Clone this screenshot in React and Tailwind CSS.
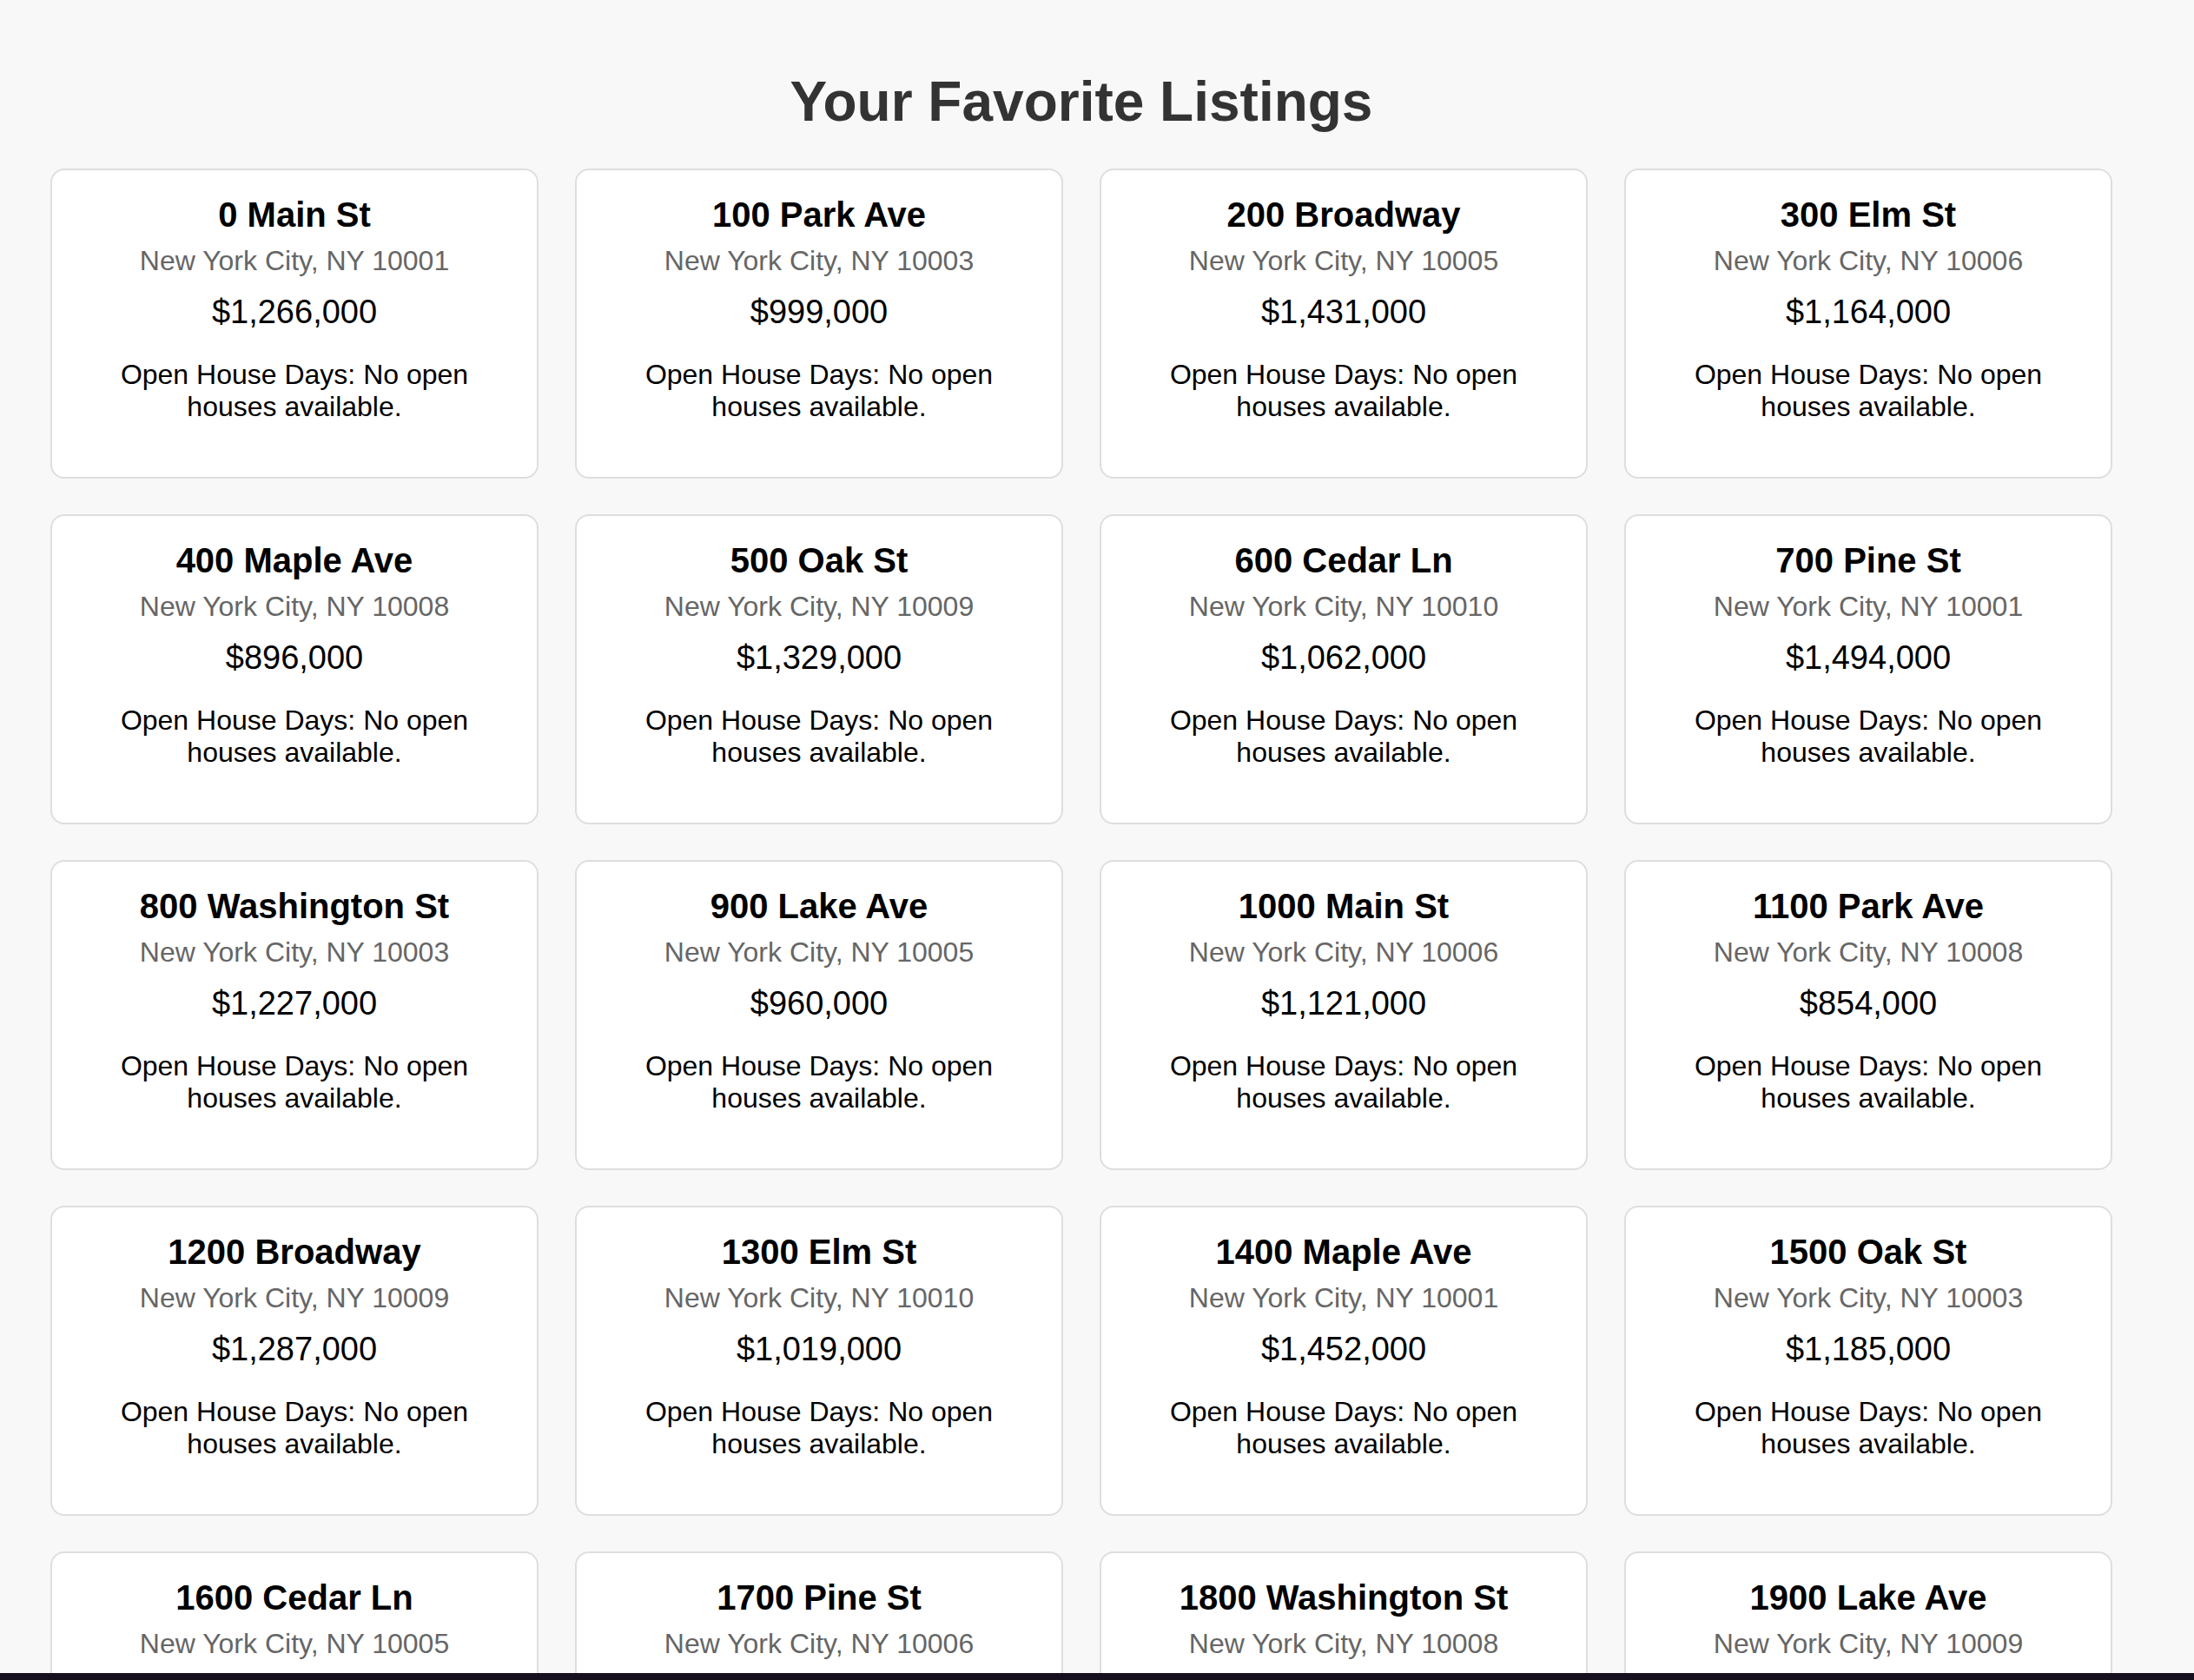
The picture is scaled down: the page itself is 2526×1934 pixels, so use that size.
import React from 'react'

// Favorite listings grid, sized to match a 2x-density capture
const STREETS = [
  'Main St',
  'Park Ave',
  'Broadway',
  'Elm St',
  'Maple Ave',
  'Oak St',
  'Cedar Ln',
  'Pine St',
  'Washington St',
  'Lake Ave',
]

const ZIPS = ['10001', '10003', '10005', '10006', '10008', '10009', '10010']

const PRICES = [
  1266000, 999000, 1431000, 1164000, 896000, 1329000, 1062000, 1494000, 1227000, 960000,
  1121000, 854000, 1287000, 1019000, 1452000, 1185000, 918000, 1353000, 1096000, 1478000,
]

const listings = PRICES.map((price, i) => ({
  id: i,
  street: `${i * 100} ${STREETS[i % STREETS.length]}`,
  city: 'New York City',
  state: 'NY',
  zip: ZIPS[i % ZIPS.length],
  price,
  openHouses: [],
}))

function formatPrice(n) {
  return '$' + n.toLocaleString('en-US')
}

export default function App() {
  return (
    <div
      className="min-h-screen bg-[#f8f8f8] pt-[80px] pb-[60px] pl-[58px] pr-[94px]"
      style={{ fontFamily: '"Liberation Sans", Arial, Helvetica, sans-serif' }}
    >
      <h1 className="text-center text-[64px] leading-[74px] font-bold text-[#333333] mb-[40px]">
        Your Favorite Listings
      </h1>

      <div className="grid grid-cols-4 gap-x-[42px] gap-y-[41px]">
        {listings.map((listing) => (
          <ListingCard key={listing.id} listing={listing} />
        ))}
      </div>

      {/* dark strip along the bottom edge of the capture */}
      <div className="fixed bottom-0 left-0 right-0 h-[8px] bg-[#160f1d]" />
    </div>
  )
}

function ListingCard({ listing }) {
  const days =
    listing.openHouses.length > 0
      ? listing.openHouses.join(', ')
      : 'No open houses available.'

  return (
    <div className="bg-white border-2 border-[#dedede] rounded-[16px] px-[32px] pt-[28px] pb-[62px] text-center">
      <h3 className="text-[40px] leading-[46px] font-bold text-black">{listing.street}</h3>
      <p className="mt-[12px] text-[32px] leading-[36px] text-[#666666]">
        {listing.city}, {listing.state} {listing.zip}
      </p>
      <p className="mt-[19px] text-[38px] leading-[44px] text-black">{formatPrice(listing.price)}</p>
      <p className="mt-[32px] text-[32px] leading-[37px] text-black">Open House Days: {days}</p>
    </div>
  )
}
